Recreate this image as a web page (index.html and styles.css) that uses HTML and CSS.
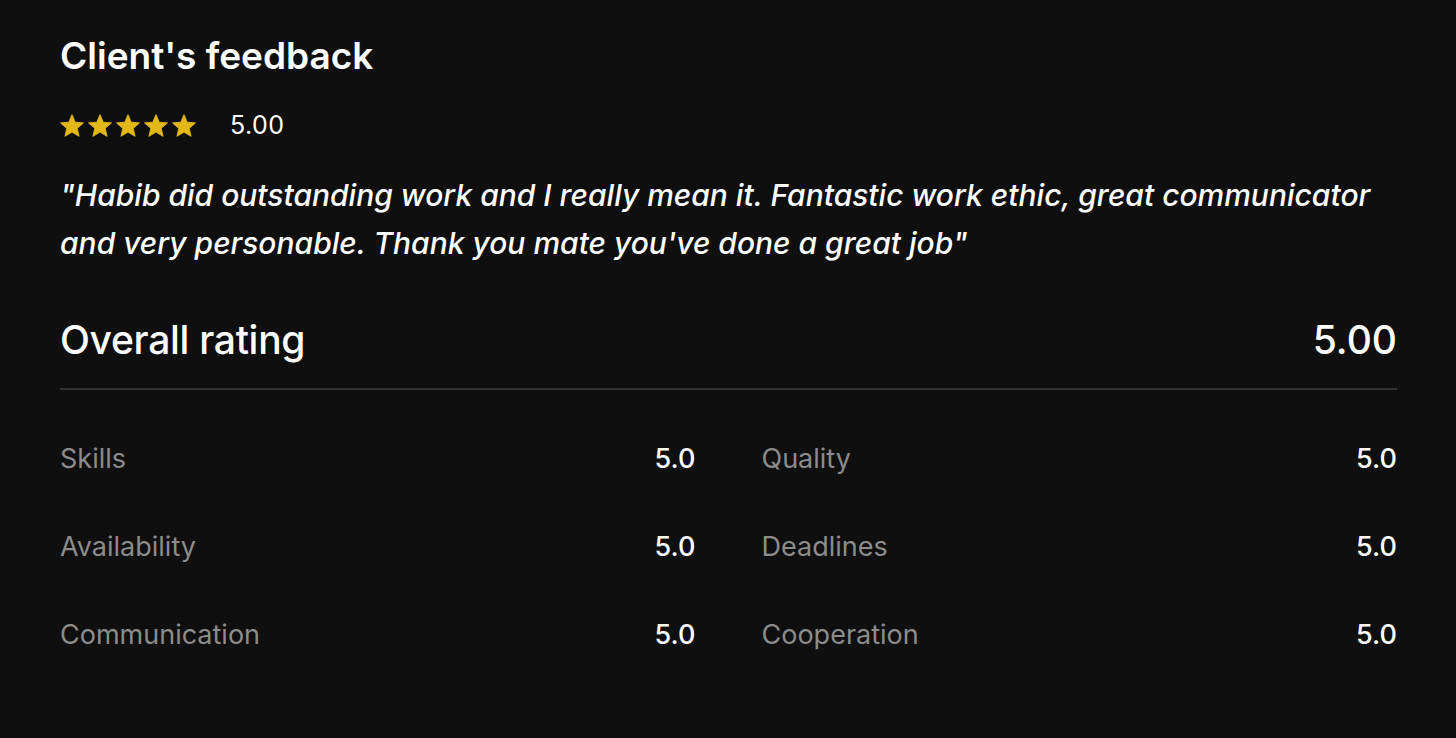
FILE: index.html
```html
<!DOCTYPE html>
<html lang="en">
<head>
<meta charset="utf-8">
<title>Client's feedback</title>
<link rel="stylesheet" href="styles.css">
</head>
<body>
<main class="feedback">
  <h2 class="feedback-title">Client's feedback</h2>
  <div class="stars-row">
    <div class="stars">
      <svg class="star" viewBox="1.5 1.5 21 20"><path d="M12 17.27L18.18 21l-1.64-7.03L22 9.24l-7.19-.61L12 2 9.19 8.63 2 9.24l5.460 4.73L5.82 21z"/></svg>
      <svg class="star" viewBox="1.5 1.5 21 20"><path d="M12 17.27L18.18 21l-1.64-7.03L22 9.24l-7.19-.61L12 2 9.19 8.63 2 9.24l5.46 4.73L5.82 21z"/></svg>
      <svg class="star" viewBox="1.5 1.5 21 20"><path d="M12 17.27L18.18 21l-1.64-7.03L22 9.24l-7.19-.61L12 2 9.19 8.63 2 9.24l5.46 4.73L5.82 21z"/></svg>
      <svg class="star" viewBox="1.5 1.5 21 20"><path d="M12 17.27L18.18 21l-1.64-7.03L22 9.24l-7.19-.61L12 2 9.19 8.63 2 9.24l5.46 4.73L5.82 21z"/></svg>
      <svg class="star" viewBox="1.5 1.5 21 20"><path d="M12 17.27L18.18 21l-1.64-7.03L22 9.24l-7.19-.61L12 2 9.19 8.63 2 9.24l5.46 4.73L5.82 21z"/></svg>
    </div>
    <span class="stars-score">5.00</span>
  </div>
  <p class="quote">"Habib did outstanding work and I really mean it. Fantastic work ethic, great communicator and very personable. Thank you mate you've done a great job"</p>
  <div class="overall">
    <h3 class="overall-title">Overall rating</h3>
    <span class="overall-score">5.00</span>
  </div>
  <div class="ratings">
    <div class="rating"><span class="rating-label">Skills</span><span class="rating-value">5.0</span></div>
    <div class="rating"><span class="rating-label">Quality</span><span class="rating-value">5.0</span></div>
    <div class="rating"><span class="rating-label">Availability</span><span class="rating-value">5.0</span></div>
    <div class="rating"><span class="rating-label">Deadlines</span><span class="rating-value">5.0</span></div>
    <div class="rating"><span class="rating-label">Communication</span><span class="rating-value">5.0</span></div>
    <div class="rating"><span class="rating-label">Cooperation</span><span class="rating-value">5.0</span></div>
  </div>
</main>
</body>
</html>
```

FILE: styles.css
```css
* { box-sizing: border-box; }
html, body {
  margin: 0;
  background: #0f0f0f;
  color: #ffffff;
  font-family: "Inter", "Liberation Sans", Arial, sans-serif;
}
.feedback {
  padding: 32px 59px 40px 60px;
}
.feedback-title {
  margin: 0;
  font-size: 37px;
  line-height: 48px;
  font-weight: 600;
  letter-spacing: 0;
}
.stars-row {
  display: flex;
  align-items: center;
  gap: 34px;
  margin-top: 31px;
  height: 28px;
}
.stars {
  display: flex;
  gap: 4px;
}
.star {
  width: 24px;
  height: 23px;
  fill: #e1b818;
  stroke: #e1b818;
  stroke-width: 0.8;
  stroke-linejoin: round;
}
.stars-score {
  font-size: 25px;
  line-height: 28px;
  letter-spacing: 0.5px;
}
.quote {
  margin: 32px 0 0;
  font-size: 30px;
  line-height: 48px;
  font-style: italic;
  font-weight: 500;
  letter-spacing: 0;
}
.overall {
  display: flex;
  justify-content: space-between;
  align-items: center;
  margin-top: 49px;
  padding-bottom: 24px;
  border-bottom: 2px solid #333333;
}
.overall-title {
  margin: 0;
  font-size: 39px;
  line-height: 48px;
  font-weight: 500;
  letter-spacing: -0.3px;
}
.overall-score {
  font-size: 39px;
  line-height: 48px;
  font-weight: 500;
}
.ratings {
  display: grid;
  grid-template-columns: 1fr 1fr;
  column-gap: 66px;
  row-gap: 56px;
  margin-top: 53px;
}
.rating {
  display: flex;
  justify-content: space-between;
  align-items: center;
  font-size: 27px;
  line-height: 32px;
}
.rating-label {
  color: #8c8c8c;
}
.rating-value {
  color: #ffffff;
  font-weight: 500;
}
```
